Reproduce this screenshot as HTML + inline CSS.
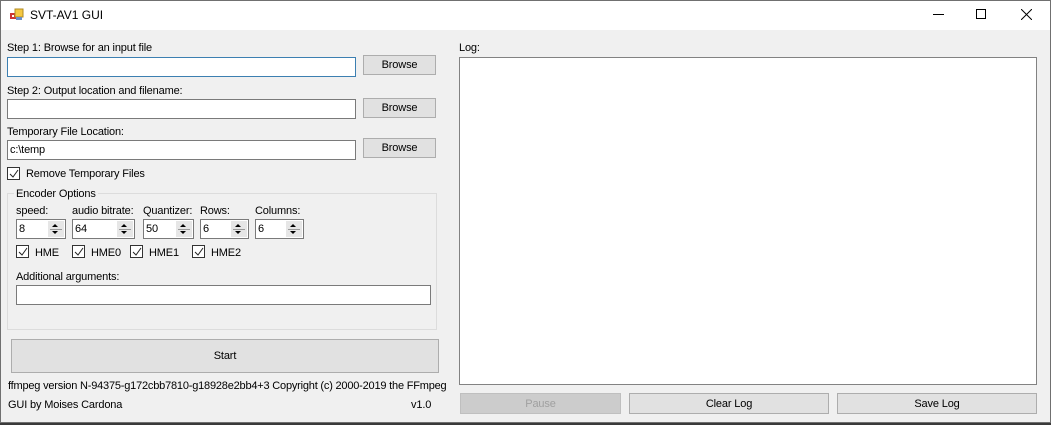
<!DOCTYPE html>
<html><head><style>
*{margin:0;padding:0;box-sizing:border-box}
body{width:1051px;height:425px;overflow:hidden;background:#3a3a3a;font-family:"Liberation Sans",sans-serif;font-size:11px;letter-spacing:-0.15px;color:#000;position:relative}
.win{position:absolute;left:0;top:0;width:1051px;height:423px;background:#f0f0f0}
.frame{position:absolute;left:0;top:0;width:1051px;height:423px;border:1px solid #707070;pointer-events:none}
.title{position:absolute;left:0;top:0;width:1051px;height:30px;background:#fff}
.a{position:absolute;white-space:nowrap}
.tb{position:absolute;background:#fff;border:1px solid #7a7a7a;height:20px;padding:3px 2px;font-size:11px}
.btn{position:absolute;background:#e1e1e1;border:1px solid #adadad;text-align:center;font-size:11px}
.cb{position:absolute;width:13px;height:13px;border:1px solid #333;background:#fff}
.cb svg{position:absolute;left:1px;top:1px}
.spin{position:absolute;width:16px;height:16px;right:1px;top:1px;background:#e6e6e6}
.spin:before{content:"";position:absolute;left:4px;top:3px;border:3px solid transparent;border-bottom:3px solid #000;border-top:0}
.spin:after{content:"";position:absolute;left:4px;top:10px;border:3px solid transparent;border-top:3px solid #000;border-bottom:0}
.spin i{position:absolute;left:2px;right:2px;top:8px;height:1px;background:#999}
</style></head><body>
<div class="win">
<div class="title">
<svg class="a" style="left:10px;top:8px" width="14" height="14"><rect x="0" y="5" width="6" height="6" fill="#c33"/><rect x="2" y="7" width="2" height="2" fill="#fff"/><rect x="5" y="1" width="8" height="8" fill="#f5c842" stroke="#b08a20"/><rect x="6" y="9" width="6" height="3" fill="#6a8fc8"/></svg>
<div class="a" style="left:30px;top:8px;font-size:12px;letter-spacing:0">SVT-AV1 GUI</div>
<div class="a" style="left:933px;top:14px;width:11px;height:1px;background:#000"></div>
<div class="a" style="left:976px;top:9px;width:10px;height:10px;border:1px solid #000"></div>
<svg class="a" style="left:1021px;top:9px" width="11" height="11"><path d="M0 0L11 11M11 0L0 11" stroke="#000" stroke-width="1"/></svg>
</div>

<div class="a" style="left:7px;top:42px">Step 1: Browse for an input file</div>
<div class="tb" style="left:7px;top:57px;width:349px;border-color:#3c7fb1"></div>
<div class="btn" style="left:363px;top:55px;width:73px;height:20px;line-height:19px">Browse</div>
<div class="a" style="left:7px;top:85px">Step 2: Output location and filename:</div>
<div class="tb" style="left:7px;top:99px;width:349px"></div>
<div class="btn" style="left:363px;top:98px;width:73px;height:20px;line-height:19px">Browse</div>
<div class="a" style="left:7px;top:126px">Temporary File Location:</div>
<div class="tb" style="left:7px;top:140px;width:349px">c:\temp</div>
<div class="btn" style="left:363px;top:138px;width:73px;height:20px;line-height:19px">Browse</div>
<div class="cb" style="left:7px;top:167px"><svg width="10" height="10"><path d="M1 5L4 8L9 1" stroke="#222" fill="none"/></svg></div>
<div class="a" style="left:26px;top:168px">Remove Temporary Files</div>

<div class="a" style="left:7px;top:193px;width:430px;height:137px;border:1px solid #dcdcdc"></div>
<div class="a" style="left:14px;top:188px;background:#f0f0f0;padding:0 2px">Encoder Options</div>
<div class="a" style="left:16px;top:205px">speed:</div>
<div class="a" style="left:72px;top:205px">audio bitrate:</div>
<div class="a" style="left:143px;top:205px">Quantizer:</div>
<div class="a" style="left:200px;top:205px">Rows:</div>
<div class="a" style="left:255px;top:205px">Columns:</div>
<div class="tb" style="left:16px;top:219px;width:50px">8<div class="spin"><i></i></div></div>
<div class="tb" style="left:72px;top:219px;width:63px">64<div class="spin"><i></i></div></div>
<div class="tb" style="left:143px;top:219px;width:51px">50<div class="spin"><i></i></div></div>
<div class="tb" style="left:200px;top:219px;width:49px">6<div class="spin"><i></i></div></div>
<div class="tb" style="left:255px;top:219px;width:49px">6<div class="spin"><i></i></div></div>
<div class="cb" style="left:16px;top:245px"><svg width="10" height="10"><path d="M1 5L4 8L9 1" stroke="#222" fill="none"/></svg></div>
<div class="a" style="left:35px;top:247px">HME</div>
<div class="cb" style="left:72px;top:245px"><svg width="10" height="10"><path d="M1 5L4 8L9 1" stroke="#222" fill="none"/></svg></div>
<div class="a" style="left:91px;top:247px">HME0</div>
<div class="cb" style="left:130px;top:245px"><svg width="10" height="10"><path d="M1 5L4 8L9 1" stroke="#222" fill="none"/></svg></div>
<div class="a" style="left:149px;top:247px">HME1</div>
<div class="cb" style="left:192px;top:245px"><svg width="10" height="10"><path d="M1 5L4 8L9 1" stroke="#222" fill="none"/></svg></div>
<div class="a" style="left:211px;top:247px">HME2</div>
<div class="a" style="left:16px;top:271px">Additional arguments:</div>
<div class="tb" style="left:16px;top:285px;width:415px"></div>

<div class="btn" style="left:11px;top:339px;width:428px;height:34px;line-height:33px">Start</div>
<div class="a" style="left:8px;top:380px;letter-spacing:-0.2px">ffmpeg version N-94375-g172cbb7810-g18928e2bb4+3 Copyright (c) 2000-2019 the FFmpeg</div>
<div class="a" style="left:8px;top:399px">GUI by Moises Cardona</div>
<div class="a" style="left:411px;top:399px">v1.0</div>

<div class="a" style="left:459px;top:42px">Log:</div>
<div class="a" style="left:459px;top:57px;width:578px;height:328px;background:#fff;border:1px solid #828282"></div>
<div class="btn" style="left:460px;top:393px;width:161px;height:21px;line-height:20px;background:#cccccc;border-color:#bfbfbf;color:#a0a0a0">Pause</div>
<div class="btn" style="left:629px;top:393px;width:200px;height:21px;line-height:20px">Clear Log</div>
<div class="btn" style="left:837px;top:393px;width:200px;height:21px;line-height:20px">Save Log</div>
<div class="frame"></div>
</div>
</body></html>
